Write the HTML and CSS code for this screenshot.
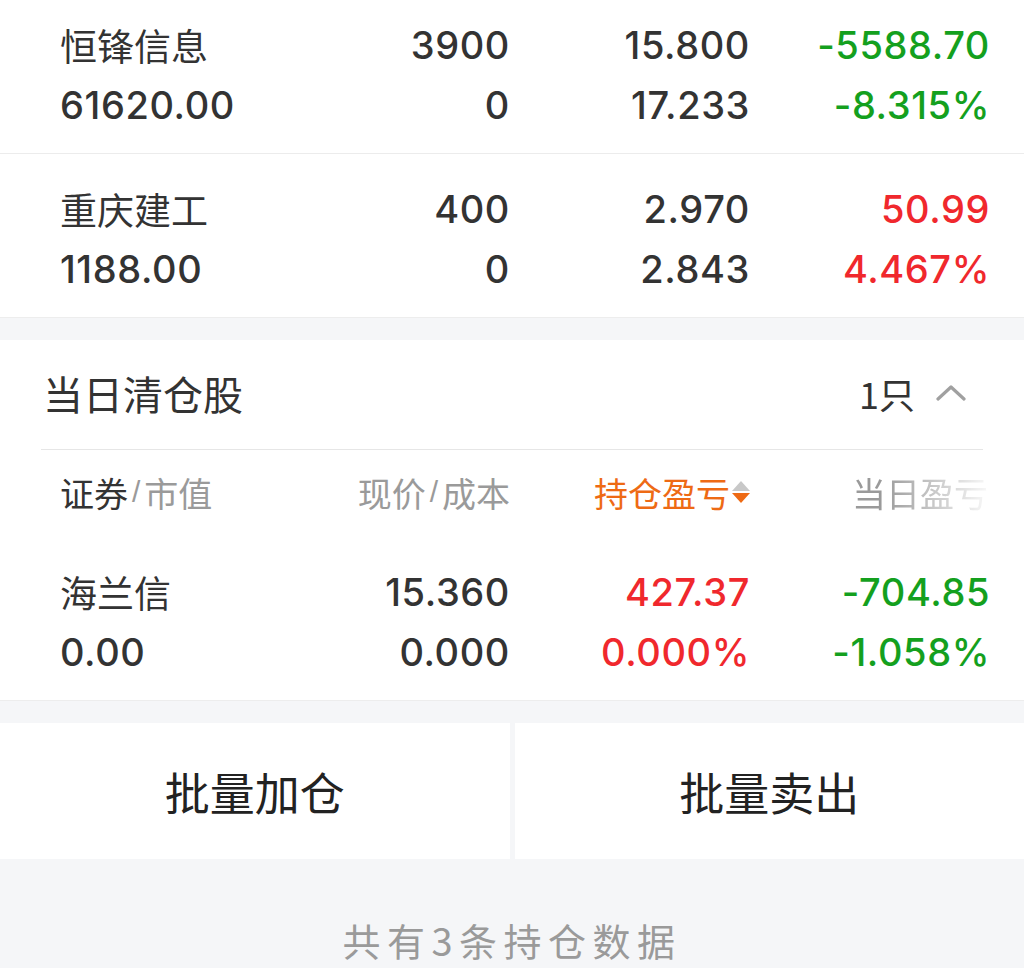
FILE: index.html
```html
<!DOCTYPE html>
<html lang="zh-CN">
<head>
<meta charset="utf-8">
<link rel="stylesheet" href="styles.css">
</head>
<body>
<div class="page">
  <section class="holdings">
    <div class="row stock-row first">
      <div class="cell left name">恒锋信息</div>
      <div class="cell num">3900</div>
      <div class="cell num">15.800</div>
      <div class="cell num green">-5588.70</div>
      <div class="cell left num">61620.00</div>
      <div class="cell num">0</div>
      <div class="cell num">17.233</div>
      <div class="cell num green">-8.315%</div>
    </div>
    <div class="row stock-row">
      <div class="cell left name">重庆建工</div>
      <div class="cell num">400</div>
      <div class="cell num">2.970</div>
      <div class="cell num red">50.99</div>
      <div class="cell left num">1188.00</div>
      <div class="cell num">0</div>
      <div class="cell num">2.843</div>
      <div class="cell num red">4.467%</div>
    </div>
  </section>

  <section class="cleared">
    <div class="cleared-head">
      <div class="cleared-title">当日清仓股</div>
      <div class="cleared-count">1只
        <svg class="chevron" width="32" height="18" viewBox="0 0 32 18"><path d="M3 16 L16 4 L29 16" fill="none" stroke="#a0a0a0" stroke-width="3.2" stroke-linecap="round" stroke-linejoin="round"/></svg>
      </div>
    </div>
    <div class="col-head">
      <div class="hcell left"><span class="dark">证券</span><span class="slash">/</span>市值</div>
      <div class="hcell">现价<span class="slash">/</span>成本</div>
      <div class="hcell active">持仓盈亏<span class="sort"><span class="tri up"></span><span class="tri down"></span></span></div>
      <div class="hcell fade">当日盈亏</div>
    </div>
    <div class="row stock-row">
      <div class="cell left name">海兰信</div>
      <div class="cell num">15.360</div>
      <div class="cell num red">427.37</div>
      <div class="cell num green">-704.85</div>
      <div class="cell left num">0.00</div>
      <div class="cell num">0.000</div>
      <div class="cell num red">0.000%</div>
      <div class="cell num green">-1.058%</div>
    </div>
  </section>

  <div class="actions">
    <div class="action">批量加仓</div>
    <div class="action">批量卖出</div>
  </div>

  <div class="footer-note">共有3条持仓数据</div>
</div>
</body>
</html>
```

FILE: styles.css
```css
html, body {
  margin: 0;
  padding: 0;
  background: #f5f6f8;
}
body {
  font-family: "Inter", "Noto Sans CJK SC", sans-serif;
  color: #333;
  width: 1024px;
  height: 968px;
  overflow: hidden;
}
.page {
  display: flex;
  flex-direction: column;
}
.holdings {
  background: #fff;
  margin-top: -10px;
  border-bottom: 1px solid #ededed;
}
.row {
  display: grid;
  grid-template-columns: 210px 240px 240px 240px;
  grid-auto-rows: 60px;
  padding: 25px 34px 18px 60px;
  align-items: center;
}
.stock-row + .stock-row {
  border-top: 1px solid #ececec;
}
.cell {
  text-align: right;
  font-size: 38px;
  line-height: 60px;
  white-space: nowrap;
}
.cell.left { text-align: left; }
.name {
  font-family: "Noto Sans CJK SC", sans-serif;
  font-size: 37px;
}
.num {
  font-family: "Inter", sans-serif;
  font-weight: 500;
  letter-spacing: 0.6px;
}
.green { color: #14a01e; }
.red { color: #f0282d; }

.cleared {
  background: #fff;
  margin-top: 22px;
  border-bottom: 1px solid #ededed;
}
.cleared-head {
  height: 109px;
  display: flex;
  align-items: center;
  justify-content: space-between;
  margin: 0 41px;
  border-bottom: 1px solid #e6e6e6;
}
.cleared-title {
  font-family: "Noto Sans CJK SC", sans-serif;
  font-size: 40px;
  padding-left: 2px;
  padding-bottom: 4px;
}
.cleared-count {
  display: flex;
  align-items: center;
  gap: 20px;
  font-family: "Noto Sans CJK SC", sans-serif;
  font-size: 36px;
  padding-right: 16px;
  padding-bottom: 4px;
}
.chevron { display: block; margin-top: -2px; }

.col-head {
  display: grid;
  grid-template-columns: 210px 240px 240px 240px;
  padding: 0 34px 6px 60px;
  height: 84px;
  align-items: center;
}
.hcell {
  font-family: "Noto Sans CJK SC", sans-serif;
  font-size: 34px;
  color: #9a9a9a;
  text-align: right;
  white-space: nowrap;
  display: flex;
  justify-content: flex-end;
  align-items: center;
}
.hcell.left { justify-content: flex-start; }
.dark { color: #333; }
.slash {
  font-family: "Liberation Sans", sans-serif;
  margin: 0 4px;
  font-size: 30px;
}
.hcell.active { color: #ee6a14; }
.sort {
  display: flex;
  flex-direction: column;
  gap: 2px;
  margin-left: 2px;
}
.tri {
  width: 0;
  height: 0;
  border-left: 9px solid transparent;
  border-right: 9px solid transparent;
}
.tri.up { border-bottom: 10px solid #c8c8c8; }
.tri.down { border-top: 10px solid #ee6a14; }
.hcell.fade {
  padding-left: 102px;
  justify-content: flex-start;
  -webkit-mask-image: linear-gradient(to right, #000 55%, rgba(0,0,0,0.05) 100%);
  mask-image: linear-gradient(to right, #000 55%, rgba(0,0,0,0.05) 100%);
}
.cleared .stock-row {
  padding-top: 22px;
  padding-bottom: 18px;
}

.actions {
  margin-top: 22px;
  display: flex;
  gap: 5px;
  height: 136px;
}
.action {
  flex: 1;
  background: #fff;
  display: flex;
  align-items: center;
  justify-content: center;
  font-family: "Noto Sans CJK SC", sans-serif;
  font-size: 45px;
  color: #222;
}
.footer-note {
  margin-top: 57px;
  text-align: center;
  font-family: "Noto Sans CJK SC", sans-serif;
  font-size: 38px;
  letter-spacing: 6.5px;
  color: #9a9a9a;
  line-height: 48px;
}
```
